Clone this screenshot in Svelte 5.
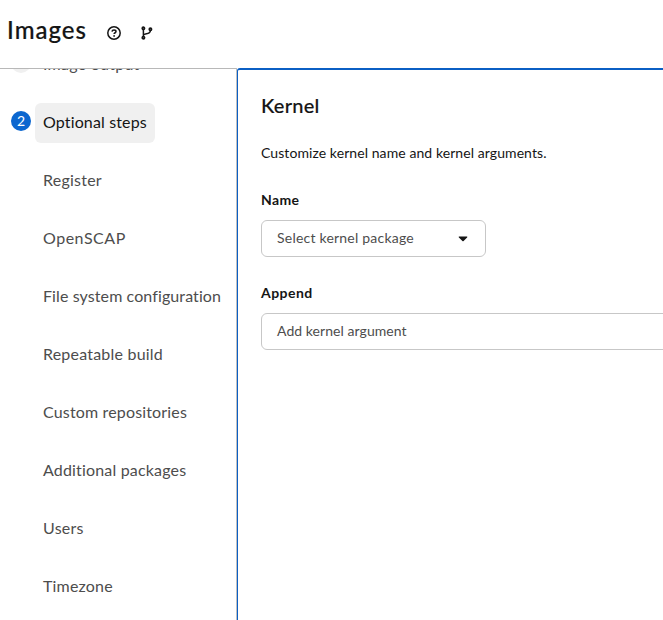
<script>
  const steps = [
    { label: 'Register', spacing: 0.24 },
    { label: 'OpenSCAP', spacing: 0.52 },
    { label: 'File system configuration', spacing: 0.1 },
    { label: 'Repeatable build', spacing: 0.21 },
    { label: 'Custom repositories', spacing: 0.16 },
    { label: 'Additional packages', spacing: 0.17 },
    { label: 'Users', spacing: 0.25 },
    { label: 'Timezone', spacing: 0.18 }
  ];
</script>

<div class="page">
  <header>
    <h1>Images</h1>
    <svg class="help" viewBox="0 0 14 14" aria-label="Help">
      <circle cx="7" cy="7" r="6.2" fill="none" stroke="#151515" stroke-width="1.5" />
      <path d="M5 5.600C5.100 4.500 5.900 4 7 4s2 .6 2 1.600C9 6.800 7.100 6.700 7.100 8.100" fill="none" stroke="#151515" stroke-width="1.5" />
      <circle cx="7.100" cy="9.900" r=".9" fill="#151515" />
    </svg>
    <svg class="branch" viewBox="0 0 12 14" aria-label="Source">
      <g fill="none" stroke="#151515" stroke-width="1.700">
        <circle cx="2.400" cy="2.300" r="1.150" />
        <circle cx="2.400" cy="11.700" r="1.150" />
        <circle cx="9.400" cy="3.300" r="1.150" />
        <path d="M2.400 3.800v6.400M9.400 4.800C9.200 7.600 7 7.500 4.500 7.900c-1.100.2-1.900.6-2.100 1.500" stroke-width="1.500" />
      </g>
    </svg>
  </header>

  <div class="wizard">
    <nav>
      <div class="item group"><span class="num done"></span><span class="link"><span class="t1">Image output</span></span></div>
      <div class="item group"><span class="num active">2</span><span class="link current"><span class="t2">Optional steps</span></span></div>
      {#each steps as step}
        <div class="item"><span class="link" style="letter-spacing: {step.spacing}px">{step.label}</span></div>
      {/each}
    </nav>
    <main>
      <h2>Kernel</h2>
      <p>Customize kernel name and kernel arguments.</p>
      <div class="label name">Name</div>
      <button class="field select">
        <span class="s1">Select kernel package</span>
        <svg viewBox="0 0 10 6" aria-hidden="true"><path d="M1.300.5h7.400c.6 0 .8.600.400 1L5.600 5c-.400.400-.800.400-1.200 0L.9 1.500C.5 1.100.7.500 1.300.500z" fill="#151515" /></svg>
      </button>
      <div class="label append">Append</div>
      <div class="field input"><span class="s2">Add kernel argument</span></div>
    </main>
  </div>
</div>

<style>
  .page {
    box-sizing: border-box;
    width: 100%;
    height: 620px;
    overflow: hidden;
    display: flex;
    flex-direction: column;
    background: #fff;
    color: #151515;
    font-family: "Lato", sans-serif;
  }
  header {
    height: 68px;
    flex: none;
    display: flex;
    align-items: flex-start;
    padding-left: 7px;
    box-sizing: border-box;
  }
  h1 {
    margin: 14px 0 0;
    width: 100px;
    font-size: 24px;
    line-height: 32px;
    font-weight: 500;
    letter-spacing: 1px;
    -webkit-text-stroke: 0.2px #151515;
    white-space: nowrap;
  }
  .help { width: 14px; height: 14px; margin-top: 26px; }
  .branch { width: 12px; height: 14px; margin: 26px 0 0 20px; }
  .wizard { display: flex; flex: 1; min-height: 0; }
  nav {
    box-sizing: border-box;
    width: 237px;
    flex: none;
    overflow: hidden;
    border-top: 1px solid #b8b8b8;
    border-right: 1px solid #c0c0c0;
    padding-left: 11px;
  }
  .item { display: flex; height: 40px; margin-bottom: 18px; padding-left: 24px; }
  .item:first-child { margin-top: -24px; }
  .group { padding-left: 0; }
  .num {
    width: 20px;
    height: 20px;
    margin: 8px 4px 0 0;
    border-radius: 50%;
    text-align: center;
    font-size: 14px;
    line-height: 20px;
  }
  .done { background: #f0f0f0; }
  .active { background: #0b66cf; color: #fff; }
  .link {
    box-sizing: border-box;
    padding: 0 8px;
    border-radius: 6px;
    color: #4d4d4d;
    font-size: 16px;
    line-height: 37px;
    white-space: nowrap;
  }
  .current { width: 120px; background: #f0f0f0; color: #151515; }
  .t1 { letter-spacing: 0.25px; }
  .t2 { letter-spacing: 0.14px; }
  main {
    flex: 1;
    min-width: 0;
    overflow: hidden;
    border-top: 2px solid #0b5fc4;
    border-left: 1px solid #0b5fc4;
    border-top-left-radius: 3px;
    padding: 22px 0 0 23px;
  }
  h2 {
    margin: 0;
    font-size: 20px;
    line-height: 26px;
    font-weight: 500;
    letter-spacing: 0.25px;
    -webkit-text-stroke: 0.15px #151515;
  }
  p { margin: 24px 0 0; font-size: 14px; line-height: 21px; letter-spacing: 0.08px; white-space: nowrap; }
  .label { font-size: 14px; line-height: 21px; font-weight: 700; }
  .name { margin-top: 26px; letter-spacing: 0.35px; }
  .append { margin-top: 25px; letter-spacing: 0.45px; }
  .field {
    box-sizing: border-box;
    display: flex;
    align-items: center;
    height: 37px;
    margin: 10px 0 0;
    padding: 0 15px;
    border: 1px solid #c7c7c7;
    border-radius: 6px;
    background: #fff;
    color: #4d4d4d;
    font: 14px/21px "Lato", sans-serif;
  }
  .field span { padding-bottom: 2px; }
  .s1 { letter-spacing: 0.22px; }
  .s2 { letter-spacing: 0.06px; }
  .select { width: 225px; }
  .select span { width: 181px; text-align: left; }
  .select svg { width: 10px; height: 6px; flex: none; }
  .input { width: 600px; }
</style>
